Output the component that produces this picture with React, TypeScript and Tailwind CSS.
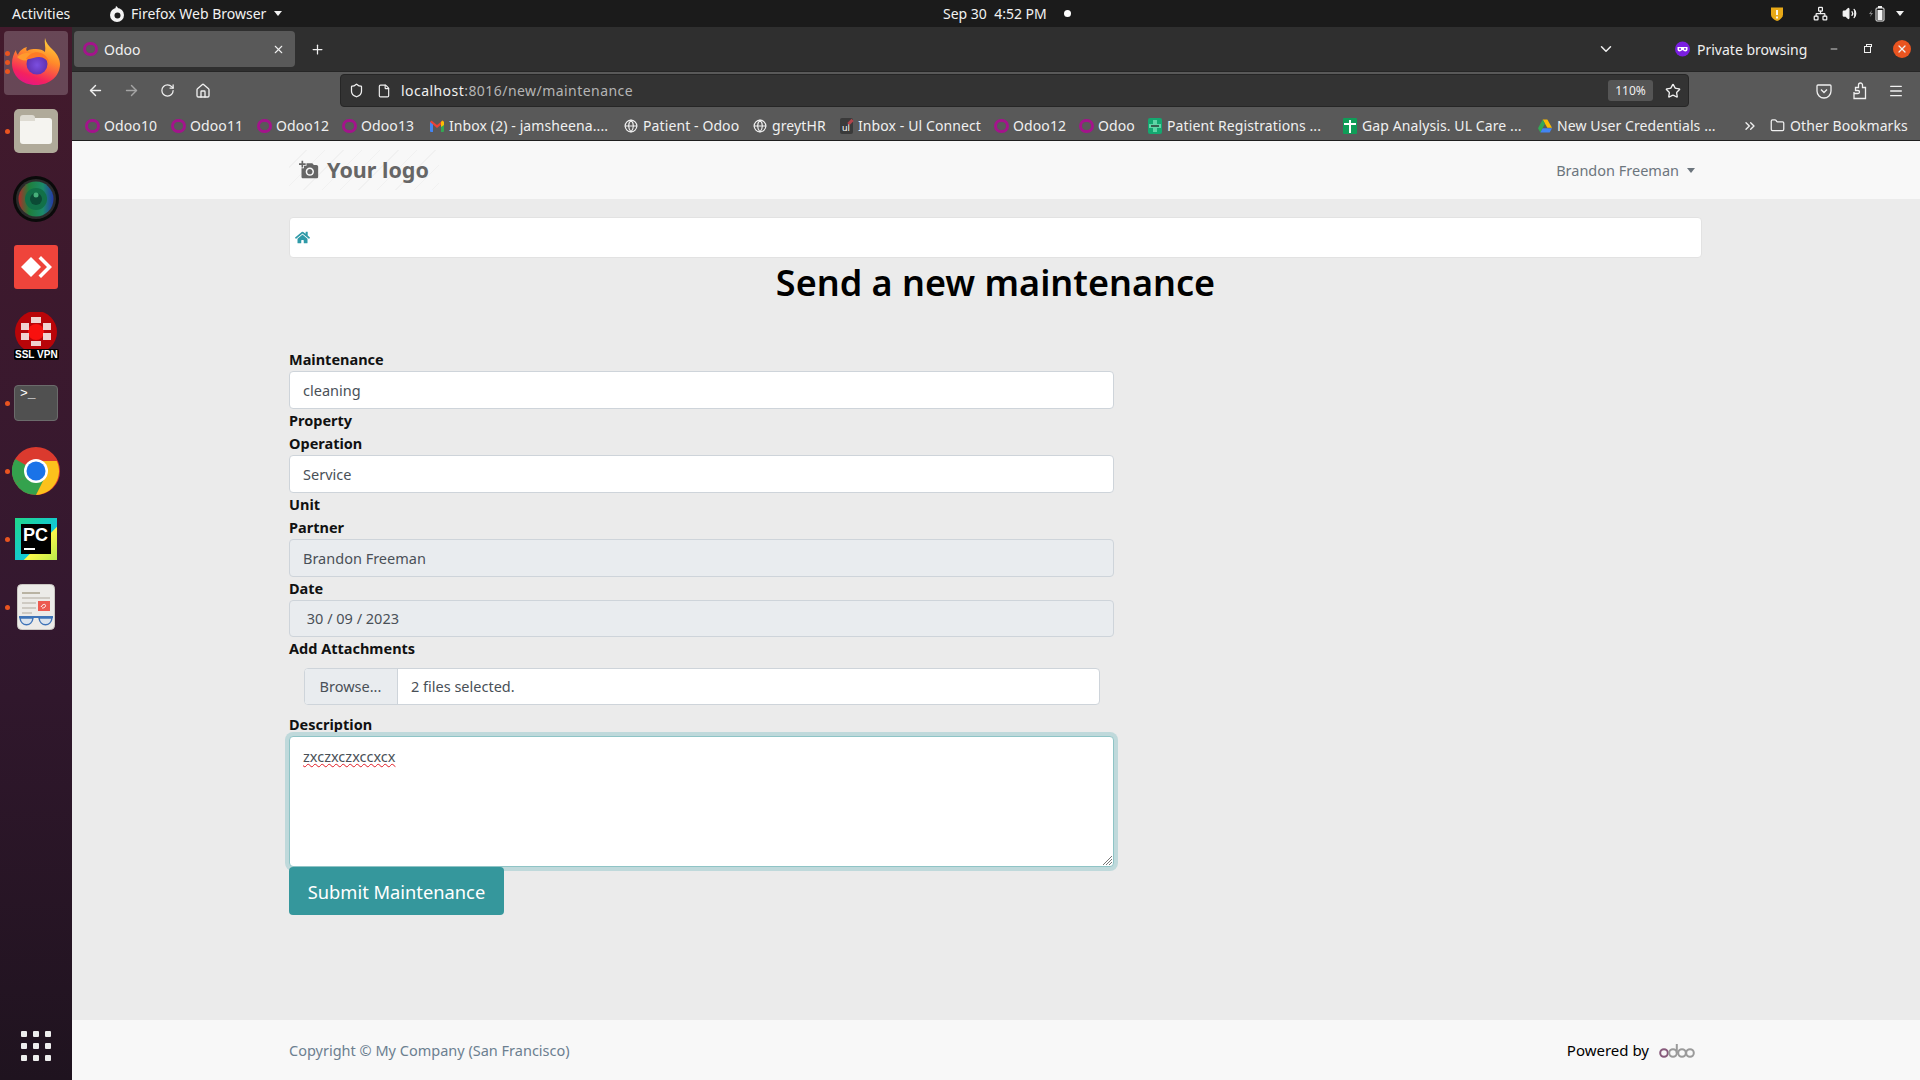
import { ArrowLeft, ArrowRight, ChevronDown, ChevronsRight, File, Folder, Globe, Home, Menu, Minus, Network, Plus, RotateCw, Shield, Star, Volume2, X } from "lucide-react";
import { FaHome } from "react-icons/fa";
import { MdAddAPhoto } from "react-icons/md";

function OdooRing() {
  return <span className="block h-[14px] w-[15px] shrink-0 rounded-full border-[3px] border-[#a3148b]" />;
}

function GmailIcon() {
  return (
    <svg width="14" height="12" viewBox="0 0 14 12">
      <path d="M0 2h3v10H1a1 1 0 0 1-1-1z" fill="#4285f4" />
      <path d="M11 2h3v9a1 1 0 0 1-1 1h-2z" fill="#34a853" />
      <path d="M0 2l1.500-1.500L7 5l5.500-4.500L14 2 7 8z" fill="#ea4335" />
      <path d="M11 2l1.500-1.500L14 2v3l-3 2z" fill="#fbbc04" />
    </svg>
  );
}

function UlIcon() {
  return (
    <span className="relative flex h-[16px] w-[13px] items-end justify-center rounded-[2px] bg-[#3a3a3a] text-[9px] leading-[12px] text-white">
      ul
      <span className="absolute right-[1px] top-[1px] h-[6px] w-[3px] rotate-45 bg-[#b0444a]" />
    </span>
  );
}

function PatientIcon() {
  return (
    <span className="flex h-[16px] w-[16px] items-center justify-center rounded-[2px] bg-[#14a870]">
      <svg width="12" height="12" viewBox="0 0 12 12">
        <path d="M4 0h4v4h4v4H8v4H4V8H0V4h4z" fill="#5fd6a6" />
        <path d="M2 6h8" stroke="#2b3a33" strokeWidth="1.500" />
      </svg>
    </span>
  );
}

function GapIcon() {
  return (
    <span className="flex h-[16px] w-[16px] items-center justify-center rounded-[1px] bg-[#0f9d58]">
      <svg width="12" height="14" viewBox="0 0 12 14">
        <path d="M0 5h12M6 1v13" stroke="#fff" strokeWidth="2" />
      </svg>
    </span>
  );
}

function DriveIcon() {
  return (
    <svg width="15" height="14" viewBox="0 0 15 14">
      <path d="M5 0h5l5 9h-5z" fill="#fbbc04" />
      <path d="M5 0l2.500 4.500L2.500 14 0 9.500z" fill="#34a853" />
      <path d="M5 9.500h10L12.500 14h-10z" fill="#4285f4" />
    </svg>
  );
}

const bookmarks = [
  { label: "Odoo10", icon: <OdooRing />, width: "w-[86px]" },
  { label: "Odoo11", icon: <OdooRing />, width: "w-[86px]" },
  { label: "Odoo12", icon: <OdooRing />, width: "w-[85px]" },
  { label: "Odoo13", icon: <OdooRing />, width: "w-[88px]" },
  { label: "Inbox (2) - jamsheena....", icon: <GmailIcon />, width: "w-[194px]" },
  { label: "Patient - Odoo", icon: <Globe size={14} />, width: "w-[129px]" },
  { label: "greytHR", icon: <Globe size={14} />, width: "w-[86px]" },
  { label: "Inbox - Ul Connect", icon: <UlIcon />, width: "w-[155px]" },
  { label: "Odoo12", icon: <OdooRing />, width: "w-[85px]" },
  { label: "Odoo", icon: <OdooRing />, width: "w-[69px]" },
  { label: "Patient Registrations ...", icon: <PatientIcon />, width: "w-[195px]" },
  { label: "Gap Analysis. UL Care ...", icon: <GapIcon />, width: "w-[195px]" },
  { label: "New User Credentials ...", icon: <DriveIcon />, width: "w-[204px]" },
];

function FirefoxIcon() {
  return (
    <svg width="48" height="48" viewBox="0 0 48 48">
      <defs>
        <linearGradient id="ffBody" x1="0.7" y1="0" x2="0.3" y2="1">
          <stop offset="0" stopColor="#ffd23c" />
          <stop offset="0.4" stopColor="#ff8a2a" />
          <stop offset="0.8" stopColor="#f5225e" />
          <stop offset="1" stopColor="#e31587" />
        </linearGradient>
        <radialGradient id="ffGlobe" cx="0.5" cy="0.55" r="0.6">
          <stop offset="0" stopColor="#7b4fe0" />
          <stop offset="1" stopColor="#5b2ba8" />
        </radialGradient>
      </defs>
      <path d="M33 1c1 5 4 8 8 12 5 5 7 10 7 14 0 12-10 21-24 21S0 39 0 26c0-5 2-10 4-13 0 2 1 4 2 5 1-4 5-7 9-8-1 2-1 3 0 4 3-2 6-2 9-2 4 0 7 1 9 3 1-5-1-10 0-14z" fill="url(#ffBody)" />
      <path d="M5 20c5-4 10-5 15-3-3 2-4 4-4 6-4 1-8 0-11-3z" fill="#ff9a2e" />
      <circle cx="25" cy="27" r="10.500" fill="url(#ffGlobe)" />
      <path d="M14 22c3-5 9-8 15-6 5 2 8 6 8 11-2-4-5-7-10-7-4 0-9 3-13 2z" fill="#ff7a24" />
    </svg>
  );
}

function FilesIcon() {
  return (
    <span className="flex h-[44px] w-[44px] items-center justify-center rounded-[5px] bg-[#b0aa9a]">
      <span className="relative block h-[26px] w-[32px] rounded-[3px] bg-[#f5f4f0]">
        <span className="absolute left-0 top-[-3px] h-[6px] w-[15px] rounded-t-[3px] bg-[#dedbd2]" />
      </span>
    </span>
  );
}

function CameraIcon() {
  return (
    <svg width="46" height="46" viewBox="0 0 46 46">
      <defs>
        <linearGradient id="lens" x1="0" y1="0" x2="1" y2="0">
          <stop offset="0" stopColor="#b02a2a" />
          <stop offset="0.3" stopColor="#1f7f3c" />
          <stop offset="0.7" stopColor="#1b8a6a" />
          <stop offset="1" stopColor="#2438a8" />
        </linearGradient>
      </defs>
      <circle cx="23" cy="23" r="23" fill="#0a0a0a" />
      <circle cx="23" cy="23" r="20" fill="#2b2b2b" />
      <circle cx="23" cy="23" r="17.500" fill="url(#lens)" />
      <circle cx="23" cy="23" r="11" fill="#127048" />
      <circle cx="23" cy="23" r="6" fill="#0b4a35" />
      <circle cx="23" cy="19" r="2.500" fill="#46b07a" />
    </svg>
  );
}

function AnydeskIcon() {
  return (
    <span className="flex h-[44px] w-[44px] items-center justify-center rounded-[3px] bg-[#ef443b]">
      <svg width="32" height="24" viewBox="0 0 32 24">
        <path d="M11 2l10 10-10 10L1 12z" fill="#fff" />
        <path d="M21 1l11 11-11 11-2.500-2.500L27 12l-8.500-8.500z" fill="#fff" />
      </svg>
    </span>
  );
}

function VpnIcon() {
  return (
    <span className="relative flex h-[46px] w-[46px] justify-center">
      <svg width="44" height="44" viewBox="0 0 44 44">
        <circle cx="22" cy="20" r="21" fill="#b80509" />
        <circle cx="22" cy="20" r="8" fill="#f8100e" />
        <path d="M7 11h8v7H7zM17 5h10v6H17zM29 11h8v7h-8zM7 21h8v7H7zM29 21h8v7h-8zM17 29h10v5H17z" fill="#f0d2d0" />
      </svg>
      <span className="absolute bottom-[-2px] left-[1px] whitespace-nowrap rounded-[2px] bg-black px-[1px] font-['Liberation_Sans',sans-serif] text-[10px] font-bold leading-[11px] text-white">
        SSL VPN
      </span>
    </span>
  );
}

function ChromeIcon() {
  return (
    <svg width="48" height="48" viewBox="0 0 48 48">
      <circle cx="24" cy="24" r="24" fill="#db3a2e" />
      <path d="M24 24L3.200 36A24 24 0 0 1 3.200 12z" fill="#34a24d" />
      <path d="M24 24l-20.800 12A24 24 0 0 0 24 48l12-20.800z" fill="#34a24d" />
      <path d="M24 14h20.800A24 24 0 0 1 24 48l10-20z" fill="#fcc11c" />
      <circle cx="24" cy="24" r="12" fill="#fff" />
      <circle cx="24" cy="24" r="9.500" fill="#1a73e8" />
    </svg>
  );
}

function PycharmIcon() {
  return (
    <span className="relative flex h-[42px] w-[42px] items-center justify-center bg-[linear-gradient(135deg,#21d789_0%,#12c8d8_60%,#fcf84a_61%,#b8ea4c_100%)]">
      <span className="relative block h-[30px] w-[30px] bg-black pl-[2px] font-['Liberation_Sans',sans-serif] text-[18px] font-bold leading-[22px] text-white">
        PC
        <span className="absolute bottom-[4px] left-[3px] h-[2px] w-[11px] bg-white" />
      </span>
    </span>
  );
}

function DocViewerIcon() {
  return (
    <svg width="38" height="46" viewBox="0 0 38 46">
      <rect x="0.500" y="0.500" width="37" height="45" rx="4" fill="#ecebe8" stroke="#c9c7c2" />
      <path d="M5 9h18" stroke="#b9b3a3" strokeWidth="2" />
      <path d="M5 14h28M5 19h14M5 24h14M5 29h10M5 33h28" stroke="#c4c0b6" strokeWidth="1.500" />
      <rect x="21" y="17" width="12" height="10" fill="#ec5a50" />
      <path d="M24 23c2-4 6-3 4 0-1 1-2 1-3 1" stroke="#fff" strokeWidth="1" fill="none" />
      <path d="M2 33h34" stroke="#3f74b8" strokeWidth="2" />
      <path d="M3 34c1 9 12 9 13 0zM22 34c1 9 12 9 13 0z" fill="#dbe4ee" stroke="#3f74b8" strokeWidth="1.500" />
    </svg>
  );
}

const dockItems = [
  { icon: <FirefoxIcon />, dots: 3, active: true },
  { icon: <FilesIcon />, dots: 1, active: false },
  { icon: <CameraIcon />, dots: 0, active: false },
  { icon: <AnydeskIcon />, dots: 0, active: false },
  { icon: <VpnIcon />, dots: 0, active: false },
  {
    icon: (
      <span className="block h-[36px] w-[44px] rounded-[4px] border border-[#6b6b6b] bg-[#505050] pl-[5px] font-['Liberation_Mono',monospace] text-[13px] leading-[15px] text-white">
        {">_"}
      </span>
    ),
    dots: 1,
    active: false,
  },
  { icon: <ChromeIcon />, dots: 1, active: false },
  { icon: <PycharmIcon />, dots: 1, active: false },
  { icon: <DocViewerIcon />, dots: 1, active: false },
];

function Dock() {
  return (
    <aside className="flex w-[72px] shrink-0 flex-col bg-[linear-gradient(180deg,#431a2c_0%,#34182f_55%,#1f131f_100%)]">
      {dockItems.map((item, i) => (
        <div key={i} className={`relative flex items-center justify-center ${item.active ? "h-[70px] pb-[2px]" : "h-[68px]"}`}>
          {item.active && <span className="absolute bottom-[2px] left-[4px] right-[4px] top-[4px] rounded-[4px] bg-white/20" />}
          <span className="relative flex">{item.icon}</span>
          {item.dots > 0 && (
            <span className="absolute left-[5px] top-0 flex h-full flex-col justify-center gap-[4px]">
              {Array.from({ length: item.dots }).map((_, d) => (
                <span key={d} className="block h-[5px] w-[5px] rounded-full bg-[#e95420]" />
              ))}
            </span>
          )}
        </div>
      ))}
      <div className="mt-auto flex h-[68px] items-center justify-center">
        <div className="grid grid-cols-3 gap-x-[6px] gap-y-[6px]">
          {Array.from({ length: 9 }).map((_, i) => (
            <span key={i} className="block h-[6px] w-[6px] rounded-[1px] bg-[#eeeeee]" />
          ))}
        </div>
      </div>
    </aside>
  );
}

function TopBar() {
  return (
    <header className="flex h-[27px] shrink-0 items-center bg-[#1b1b1b] text-[14px] text-[#f2f2f2]">
      <span className="ml-[12px] w-[97px]">Activities</span>
      <svg width="16" height="16" viewBox="0 0 16 16">
        <circle cx="8" cy="9" r="7" fill="#f2f2f2" />
        <circle cx="8.500" cy="9.500" r="3" fill="#1b1b1b" />
        <path d="M7 0c2 1 3 3 2 5L6 4z" fill="#f2f2f2" />
      </svg>
      <span className="ml-[6px] w-[143px] whitespace-nowrap">Firefox Web Browser</span>
      <span className="h-0 w-0 border-x-[4px] border-t-[5px] border-x-transparent border-t-[#f2f2f2]" />
      <span className="ml-[661px] w-[121px] whitespace-nowrap">Sep 30 &nbsp;4:52 PM</span>
      <span className="h-[7px] w-[7px] rounded-full bg-white" />
      <span className="ml-auto flex items-center">
        <svg width="14" height="16" viewBox="0 0 14 16">
          <path d="M1 1.500h12v7c0 3-3 5.500-6 6.500-3-1-6-3.500-6-6.500z" fill="#e8a917" />
          <path d="M7 4v5M7 10.500v2" stroke="#fff" strokeWidth="1.800" />
        </svg>
        <Network size={15} className="ml-[29px]" />
        <Volume2 size={15} className="ml-[14px]" fill="#f2f2f2" />
        <svg width="16" height="18" viewBox="0 0 16 18" className="ml-[12px]">
          <path d="M0 9l3-4-1 3h2l-3 4 1-3z" fill="#888" />
          <rect x="7" y="3" width="8" height="13" rx="1" fill="none" stroke="#f2f2f2" />
          <rect x="9" y="1" width="4" height="2" fill="#f2f2f2" />
          <rect x="8.500" y="5" width="5" height="10" fill="#f2f2f2" />
        </svg>
        <span className="ml-[11px] mr-[16px] h-0 w-0 border-x-[4px] border-t-[5px] border-x-transparent border-t-[#f2f2f2]" />
      </span>
    </header>
  );
}

function BrowserChrome() {
  return (
    <div className="shrink-0 text-[14px] text-[#f0f0f0]">
      <div className="flex h-[44px] items-center bg-[#2f2f2f]">
        <div className="ml-[2px] flex h-[36px] w-[221px] items-center rounded-[4px] bg-[#595959] pl-[9px]">
          <OdooRing />
          <span className="ml-[6px]">Odoo</span>
          <X size={13} className="ml-auto mr-[10px]" />
        </div>
        <Plus size={15} className="ml-[15px]" />
        <ChevronDown size={18} className="ml-[1272px]" />
        <svg width="15" height="16" viewBox="0 0 15 16" className="ml-[60px]">
          <circle cx="7.500" cy="8" r="7.500" fill="#7a1ee0" />
          <path d="M2.500 6h10v2.500c0 2-2.500 2.500-3.500 1.500l-1.500-1-1.500 1c-1 1-3.500.5-3.500-1.500z" fill="#fff" />
          <circle cx="5" cy="8" r="1" fill="#7a1ee0" />
          <circle cx="10" cy="8" r="1" fill="#7a1ee0" />
        </svg>
        <span className="ml-[7px] w-[124px] whitespace-nowrap">Private browsing</span>
        <Minus size={10} className="ml-[8px]" />
        <span className="relative ml-[25px] block h-[7px] w-[7px] border border-[#f0f0f0]">
          <span className="absolute left-[1px] top-[-3px] h-[3px] w-[6px] border-x border-t border-[#f0f0f0]" />
        </span>
        <span className="ml-[22px] flex h-[18px] w-[18px] items-center justify-center rounded-full bg-[#e95420]">
          <X size={12} strokeWidth={2.500} />
        </span>
      </div>
      <div className="flex h-[37px] items-center border-t border-[#262626] bg-[#595959] pt-[1px]">
        <ArrowLeft size={17} className="ml-[15px]" />
        <ArrowRight size={17} className="ml-[19px] text-[#a5a5a5]" />
        <RotateCw size={15} className="ml-[20px]" />
        <Home size={16} className="ml-[20px]" />
        <div className="ml-[129px] flex h-[33px] w-[1349px] items-center rounded-[4px] border border-[#262626] bg-[#333333] pl-[8px] pr-[7px]">
          <Shield size={15} />
          <File size={14} className="ml-[13px]" />
          <span className="ml-[10px] tracking-[0.45px]">
            localhost<span className="text-[#b5b5b5]">:8016/new/maintenance</span>
          </span>
          <span className="ml-auto flex h-[21px] w-[45px] items-center justify-center rounded-[3px] bg-[#555555] text-[12px]">110%</span>
          <Star size={16} className="ml-[12px]" />
        </div>
        <svg width="16" height="16" viewBox="0 0 16 16" className="ml-[127px]" fill="none" stroke="#f0f0f0" strokeWidth="1.300">
          <path d="M2 2h12a1 1 0 0 1 1 1v5a7 7 0 0 1-14 0V3a1 1 0 0 1 1-1z" />
          <path d="M5 6.500l3 3 3-3" />
        </svg>
        <svg width="16" height="18" viewBox="0 0 16 18" className="ml-[20px]" fill="none" stroke="#f0f0f0" strokeWidth="1.300">
          <path d="M2 10V16.500H13.500V5.500H10.500V3a2 2 0 0 0-4 0V5.500H3.500V8.500H6a1.500 1.500 0 0 1 0 3H2z" />
        </svg>
        <Menu size={16} className="ml-[20px]" />
      </div>
      <div className="flex h-[33px] items-center border-b border-[#1f1f1f] bg-[#595959] pl-[13px] pt-[3px] tracking-[0.1px]">
        {bookmarks.map((b, i) => (
          <div key={i} className={`${b.width} flex shrink-0 items-center gap-[5px] whitespace-nowrap`}>
            <span className="flex w-[14px] justify-center">{b.icon}</span>
            <span>{b.label}</span>
          </div>
        ))}
        <ChevronsRight size={16} />
        <Folder size={15} className="ml-[12px]" />
        <span className="ml-[5px] whitespace-nowrap">Other Bookmarks</span>
      </div>
    </div>
  );
}

function Label({ children }: { children: string }) {
  return <div className="h-[23.300px] text-[14.500px] font-bold leading-[23px] text-[#111111]">{children}</div>;
}

function Field({ value, disabled }: { value: string; disabled?: boolean }) {
  return (
    <div className={`flex h-[37.400px] items-center rounded-[4px] border border-[#ced4da] pl-[13px] pt-[1px] text-[#495057] ${disabled ? "bg-[#e9ecef]" : "bg-white"}`}>
      {value}
    </div>
  );
}

function MaintenanceForm() {
  return (
    <div className="w-[825px] text-[14.500px]">
      <Label>Maintenance</Label>
      <Field value="cleaning" />
      <Label>Property</Label>
      <Label>Operation</Label>
      <Field value="Service" />
      <Label>Unit</Label>
      <Label>Partner</Label>
      <Field value="Brandon Freeman" disabled />
      <Label>Date</Label>
      <Field value={"\u00a030 / 09 / 2023"} disabled />
      <Label>Add Attachments</Label>
      <div className="ml-[15px] mt-[7px] flex h-[37.400px] w-[796px] overflow-hidden rounded-[4px] border border-[#ced4da] bg-white pt-0 text-[#495057]">
        <span className="flex w-[93px] items-center justify-center border-r border-[#ced4da] bg-[#e9ecef] pr-[1px] pt-[1px]">Browse...</span>
        <span className="flex items-center pl-[13px] pt-[1px]">2 files selected.</span>
      </div>
      <div className="mt-[8px]">
        <Label>Description</Label>
      </div>
      <div className="relative h-[131px] rounded-[4px] border border-[#8fc4c6] bg-white pl-[13px] pt-[11px] text-[14.500px] leading-[16px] text-[#495057] shadow-[0_0_0_4px_#bfd9db]">
        <span className="underline decoration-[#e01b24] decoration-wavy decoration-1">zxczxczxccxcx</span>
        <svg width="10" height="10" viewBox="0 0 10 10" className="absolute bottom-[1px] right-[1px]" stroke="#777">
          <path d="M10 1L1 10M10 4L4 10M10 7L7 10" />
        </svg>
      </div>
      <button className="relative flex h-[48px] w-[215px] items-center justify-center rounded-[4px] bg-[#35979c] text-[18.300px] text-white">
        Submit Maintenance
      </button>
    </div>
  );
}

function OdooLogo() {
  return (
    <svg width="36" height="16" viewBox="0 0 36 16" fill="none" strokeWidth="2">
      <circle cx="5" cy="10" r="3.800" stroke="#875a7b" />
      <circle cx="14" cy="10" r="3.800" stroke="#9a9a9a" />
      <path d="M17.800 10V1" stroke="#9a9a9a" />
      <circle cx="23" cy="10" r="3.800" stroke="#9a9a9a" />
      <circle cx="31" cy="10" r="3.800" stroke="#9a9a9a" />
    </svg>
  );
}

function Page() {
  return (
    <div className="flex min-h-0 flex-1 flex-col font-['Noto_Sans',sans-serif]">
      <nav className="flex h-[58px] shrink-0 items-center bg-[#f8f8f8] pl-[217px] pr-[225px]">
        <div className="flex h-[40px] w-[150px] items-center bg-[repeating-linear-gradient(135deg,#f8f8f8_0px,#f8f8f8_12px,#f1f1f1_12px,#f1f1f1_13px)] pl-[10px] text-[#666666]">
          <MdAddAPhoto size={20} />
          <span className="ml-[8px] text-[21.500px] font-bold leading-none">Your logo</span>
        </div>
        <div className="ml-auto flex items-center pt-[1px] text-[14.500px] text-[#6c757d]">
          Brandon Freeman
          <span className="ml-[8px] h-0 w-0 border-x-[4px] border-t-[5px] border-x-transparent border-t-[#6c757d]" />
        </div>
      </nav>
      <main className="min-h-0 flex-1 bg-[#ebebeb] pl-[217px]">
        <div className="w-[1413px] pt-[18px]">
          <div className="flex h-[41px] items-center rounded-[4px] border border-[#e2e2e2] bg-white pl-[5px]">
            <FaHome size={15} className="text-[#2f9aa8]" />
          </div>
          <h1 className="mb-[40px] mt-[0px] h-[50px] text-center text-[36px] font-semibold leading-[50px] text-black">Send a new maintenance</h1>
          <MaintenanceForm />
        </div>
      </main>
      <footer className="flex h-[60px] shrink-0 items-center bg-[#f8f8f8] pl-[217px] pr-[225px] pt-[2px] text-[14.500px]">
        <span className="text-[#6c7f90]">Copyright © My Company (San Francisco)</span>
        <span className="ml-auto pb-[2px] text-[15px] text-black">Powered by</span>
        <span className="ml-[10px]">
          <OdooLogo />
        </span>
      </footer>
    </div>
  );
}

export default function App() {
  return (
    <div className="flex h-[1080px] w-[1920px] flex-col overflow-hidden font-['Noto_Sans',sans-serif]">
      <TopBar />
      <div className="flex min-h-0 flex-1">
        <Dock />
        <div className="flex min-w-0 flex-1 flex-col">
          <BrowserChrome />
          <Page />
        </div>
      </div>
    </div>
  );
}
